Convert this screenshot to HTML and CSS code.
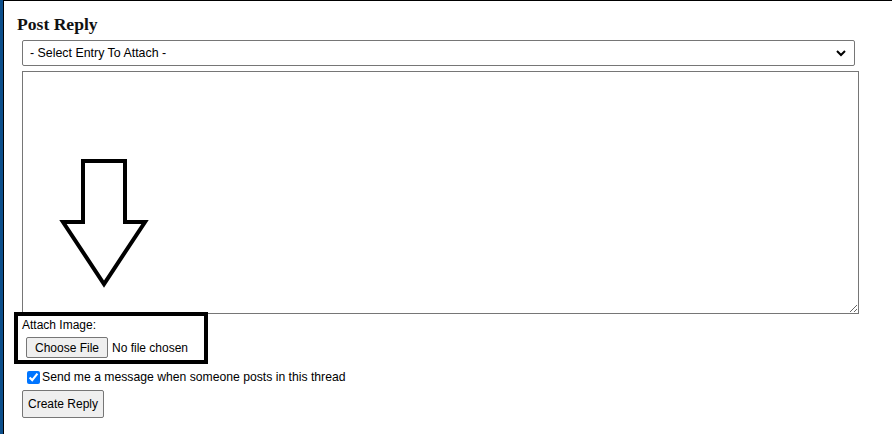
FILE: index.html
```html
<!DOCTYPE html>
<html lang="en">
<head>
<meta charset="utf-8">
<title>Post Reply</title>
<link rel="stylesheet" href="styles.css">
</head>
<body>
<div class="page">
  <div class="strip"></div>
  <main class="main">
    <h2 class="title">Post Reply</h2>
    <form class="form">
      <div class="select-wrap">
        <select class="select">
          <option>- Select Entry To Attach -</option>
        </select>
        <svg class="chevron" width="12" height="8" viewBox="0 0 12 8"><polyline points="2,2 6,6 10,2" fill="none" stroke="#000" stroke-width="2"/></svg>
      </div>
      <textarea class="textarea"></textarea>
      <div class="attach-label">Attach Image:</div>
      <div class="file-row">
        <button type="button" class="btn file-btn">Choose File</button>
        <span class="file-name">No file chosen</span>
      </div>
      <label class="check-row">
        <input type="checkbox" class="check" checked>
        <span>Send me a message when someone posts in this thread</span>
      </label>
      <button type="button" class="btn submit-btn">Create Reply</button>
    </form>
  </main>
  <svg class="arrow" width="100" height="140" viewBox="54 153 100 140">
    <polygon points="83,161 125,161 125,222 145,222 104,284 63,222 83,222" fill="#fff" stroke="#000" stroke-width="4" stroke-linejoin="miter"/>
  </svg>
  <div class="highlight"></div>
</div>
</body>
</html>
```
FILE: styles.css
```css
html, body {
  margin: 0;
  padding: 0;
  background: #fff;
}
body {
  font-family: "Liberation Sans", Arial, sans-serif;
  font-size: 12px;
  color: #000;
}
.page {
  position: relative;
  display: flex;
  width: 892px;
  height: 434px;
  overflow: hidden;
}
.strip {
  width: 3px;
  flex: none;
  background: #0c4f8c;
}
.main {
  flex: 1;
  border-left: 1px solid #000;
  border-top: 1px solid #000;
  padding-left: 13px;
}
.title {
  margin: 13px 0 0 0;
  font-family: "Liberation Serif", "DejaVu Serif", serif;
  font-weight: bold;
  font-size: 17.6px;
  line-height: 20px;
  color: #111;
}
.form {
  margin-left: 5px;
}
.select-wrap {
  position: relative;
  width: 833px;
  margin-top: 6px;
}
.select {
  display: block;
  appearance: none;
  -webkit-appearance: none;
  width: 833px;
  height: 26px;
  margin: 0;
  padding: 0 0 0 7px;
  border: 1px solid #767676;
  border-radius: 2px;
  background: #fff;
  font-family: "Liberation Sans", Arial, sans-serif;
  font-size: 12.4px;
  color: #000;
}
.chevron {
  position: absolute;
  right: 8px;
  top: 9px;
}
.textarea {
  display: block;
  box-sizing: border-box;
  width: 837px;
  height: 243px;
  margin: 5px 0 0 0;
  border: 1px solid #767676;
  border-radius: 0;
  padding: 2px;
}
.attach-label {
  margin-top: 4px;
  line-height: 14px;
}
.file-row {
  display: flex;
  align-items: center;
  margin-top: 5px;
  height: 21px;
}
.btn {
  box-sizing: border-box;
  font-family: "Liberation Sans", Arial, sans-serif;
  font-size: 12px;
  color: #000;
  background: #efefef;
  border: 1px solid #767676;
  border-radius: 2px;
  margin: 0;
}
.file-btn {
  height: 21px;
  width: 82px;
  padding: 0;
  margin-left: 4px;
}
.file-name {
  margin-left: 4px;
}
.check-row {
  display: flex;
  align-items: center;
  height: 16px;
  margin-top: 11px;
  font-size: 12.2px;
}
.check {
  width: 13px;
  height: 13px;
  margin: 0 2px 0 5px;
  accent-color: #0075ff;
}
.submit-btn {
  display: block;
  width: 82px;
  height: 28px;
  padding: 0;
  margin-top: 5px;
}
.arrow {
  position: absolute;
  left: 54px;
  top: 153px;
}
.highlight {
  position: absolute;
  left: 14px;
  top: 312px;
  width: 186px;
  height: 44px;
  border: 4px solid #000;
}
```
